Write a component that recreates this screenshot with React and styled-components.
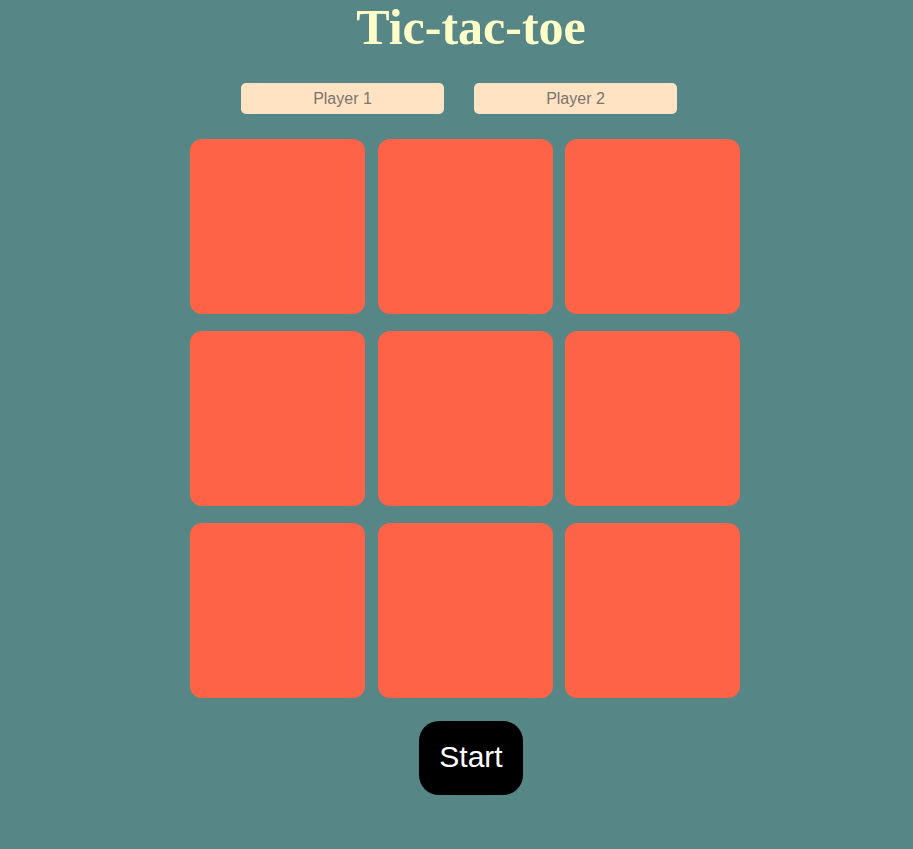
import React from 'react';
import styled, { createGlobalStyle } from 'styled-components';

const GlobalStyle = createGlobalStyle`
  html, body {
    margin: 0;
    padding: 0;
    background: #568686;
  }
`;

const Page = styled.div`
  display: flex;
  flex-direction: column;
  align-items: center;
  min-height: 849px;
`;

const Title = styled.h1`
  margin: 0 0 0 29px;
  font-family: "Liberation Serif", "Times New Roman", serif;
  font-weight: bold;
  font-size: 50px;
  line-height: 55px;
  color: #ffffc8;
`;

const Players = styled.div`
  display: flex;
  gap: 30px;
  margin: 28px 0 0 5px;
`;

const PlayerInput = styled.input`
  box-sizing: border-box;
  width: 203px;
  height: 31px;
  border: none;
  border-radius: 5px;
  background: #ffe3c3;
  font-family: "Liberation Sans", Arial, sans-serif;
  font-size: 16px;
  text-align: center;
  outline: none;
  &::placeholder {
    color: #7a7570;
  }
`;

const Board = styled.div`
  display: grid;
  grid-template-columns: repeat(3, 175px);
  grid-auto-rows: 175px;
  column-gap: 12.5px;
  row-gap: 17px;
  margin: 25px 0 0 17px;
`;

const Cell = styled.button`
  border: none;
  border-radius: 12px;
  background: #ff6347;
  padding: 0;
  cursor: pointer;
`;

const StartButton = styled.button`
  margin: 23px 0 0 29px;
  width: 104px;
  height: 74px;
  border: none;
  border-radius: 20px;
  background: #000;
  color: #fff;
  font-family: "Liberation Sans", Arial, sans-serif;
  font-size: 30px;
  line-height: 1;
  padding: 0 0 3px;
  cursor: pointer;
`;

export default function App() {
  const cells = Array.from({ length: 9 });
  return (
    <>
      <GlobalStyle />
      <Page>
        <Title>Tic-tac-toe</Title>
        <Players>
          <PlayerInput placeholder="Player 1" />
          <PlayerInput placeholder="Player 2" />
        </Players>
        <Board>
          {cells.map((_, i) => (
            <Cell key={i} />
          ))}
        </Board>
        <StartButton>Start</StartButton>
      </Page>
    </>
  );
}
